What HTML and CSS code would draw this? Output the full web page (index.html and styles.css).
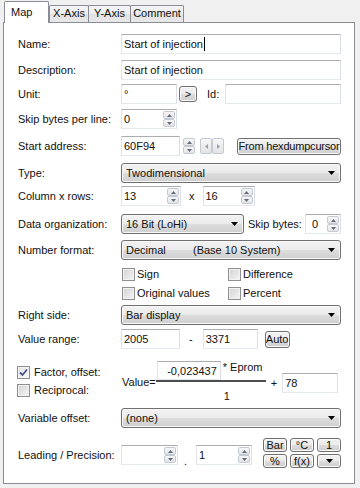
FILE: index.html
```html
<!DOCTYPE html>
<html lang="en">
<head>
    <meta charset="UTF-8">
    <meta name="viewport" content="width=device-width, initial-scale=1.0">
    <title>Map properties</title>
    <link rel="stylesheet" href="styles.css">
</head>
<body>
<div class="dialog">
    <div class="tabs">
        <div class="tab tab-map">Map</div>
        <div class="tab tab-x">X-Axis</div>
        <div class="tab tab-y">Y-Axis</div>
        <div class="tab tab-comment">Comment</div>
    </div>

    <div class="panel">
        <div class="row row-name">
            <span class="lbl">Name:</span>
            <div class="edit grow"><span>Start of injection</span><span class="caret"></span></div>
        </div>

        <div class="row row-desc">
            <span class="lbl">Description:</span>
            <div class="edit grow"><span>Start of injection</span></div>
        </div>

        <div class="row row-unit">
            <span class="lbl">Unit:</span>
            <div class="edit w-unit"><span>°</span></div>
            <button class="btn btn-more">&gt;</button>
            <span class="id-lbl">Id:</span>
            <div class="edit grow id-edit"></div>
        </div>

        <div class="row row-skip">
            <span class="lbl">Skip bytes per line:</span>
            <div class="edit w-unit">
                <span class="val">0</span>
                <span class="spin">
                    <span class="spin-btn"><svg width="5" height="3" viewBox="0 0 5 3"><path d="M0 3L2.5 0L5 3Z"/></svg></span>
                    <span class="spin-btn"><svg width="5" height="3" viewBox="0 0 5 3"><path d="M0 0L2.5 3L5 0Z"/></svg></span>
                </span>
            </div>
        </div>

        <div class="row row-start">
            <span class="lbl">Start address:</span>
            <div class="edit w-start"><span>60F94</span></div>
            <span class="spin spin-free">
                <span class="spin-btn"><svg width="5" height="3" viewBox="0 0 5 3"><path d="M0 3L2.5 0L5 3Z"/></svg></span>
                <span class="spin-btn"><svg width="5" height="3" viewBox="0 0 5 3"><path d="M0 0L2.5 3L5 0Z"/></svg></span>
            </span>
            <span class="lr">
                <span class="lr-btn"><svg width="3" height="5" viewBox="0 0 3 5"><path d="M3 0L0 2.5L3 5Z"/></svg></span>
                <span class="lr-btn"><svg width="3" height="5" viewBox="0 0 3 5"><path d="M0 0L3 2.5L0 5Z"/></svg></span>
            </span>
            <button class="btn btn-hex">From hexdumpcursor</button>
        </div>

        <div class="row row-type">
            <span class="lbl">Type:</span>
            <div class="combo grow">
                <span>Twodimensional</span>
                <svg class="arrow" width="7" height="4" viewBox="0 0 7 4"><path d="M0 0H7L3.5 4Z"/></svg>
            </div>
        </div>

        <div class="row row-cols">
            <span class="lbl">Column x rows:</span>
            <div class="edit w-cols">
                <span class="val">13</span>
                <span class="spin">
                    <span class="spin-btn"><svg width="5" height="3" viewBox="0 0 5 3"><path d="M0 3L2.5 0L5 3Z"/></svg></span>
                    <span class="spin-btn"><svg width="5" height="3" viewBox="0 0 5 3"><path d="M0 0L2.5 3L5 0Z"/></svg></span>
                </span>
            </div>
            <span class="times">x</span>
            <div class="edit w-rows">
                <span class="val">16</span>
                <span class="spin">
                    <span class="spin-btn"><svg width="5" height="3" viewBox="0 0 5 3"><path d="M0 3L2.5 0L5 3Z"/></svg></span>
                    <span class="spin-btn"><svg width="5" height="3" viewBox="0 0 5 3"><path d="M0 0L2.5 3L5 0Z"/></svg></span>
                </span>
            </div>
        </div>

        <div class="row row-data">
            <span class="lbl">Data organization:</span>
            <div class="combo w-data">
                <span>16 Bit (LoHi)</span>
                <svg class="arrow" width="7" height="4" viewBox="0 0 7 4"><path d="M0 0H7L3.5 4Z"/></svg>
            </div>
            <span class="skip-lbl">Skip bytes:</span>
            <div class="edit w-skip">
                <span class="val">0</span>
                <span class="spin">
                    <span class="spin-btn"><svg width="5" height="3" viewBox="0 0 5 3"><path d="M0 3L2.5 0L5 3Z"/></svg></span>
                    <span class="spin-btn"><svg width="5" height="3" viewBox="0 0 5 3"><path d="M0 0L2.5 3L5 0Z"/></svg></span>
                </span>
            </div>
        </div>

        <div class="row row-format">
            <span class="lbl">Number format:</span>
            <div class="combo grow">
                <span class="fmt-name">Decimal</span>
                <span class="fmt-desc">(Base 10 System)</span>
                <svg class="arrow" width="7" height="4" viewBox="0 0 7 4"><path d="M0 0H7L3.5 4Z"/></svg>
            </div>
        </div>

        <div class="row row-check row-sign">
            <span class="lbl"></span>
            <span class="chk-cell"><span class="chk"></span>Sign</span>
            <span class="chk-cell"><span class="chk"></span>Difference</span>
        </div>

        <div class="row row-check row-orig">
            <span class="lbl"></span>
            <span class="chk-cell"><span class="chk"></span>Original values</span>
            <span class="chk-cell"><span class="chk"></span>Percent</span>
        </div>

        <div class="row row-right">
            <span class="lbl">Right side:</span>
            <div class="combo grow">
                <span>Bar display</span>
                <svg class="arrow" width="7" height="4" viewBox="0 0 7 4"><path d="M0 0H7L3.5 4Z"/></svg>
            </div>
        </div>

        <div class="row row-range">
            <span class="lbl">Value range:</span>
            <div class="edit w-start"><span>2005</span></div>
            <span class="dash">-</span>
            <div class="edit w-max"><span>3371</span></div>
            <button class="btn btn-auto">Auto</button>
        </div>

        <div class="row row-factor">
            <div class="chk-col">
                <span class="chk-line"><span class="chk checked"><svg width="11" height="11" viewBox="0 0 11 11"><path d="M2 5.5L4.5 8L9 2.5" fill="none" stroke="#42548a" stroke-width="1.8"/></svg></span>Factor, offset:</span>
                <span class="chk-line"><span class="chk"></span>Reciprocal:</span>
            </div>
            <span class="value-lbl">Value=</span>
            <div class="fraction">
                <div class="frac-top">
                    <div class="edit num"><span>-0,023437</span></div>
                    <span class="eprom">* Eprom</span>
                </div>
                <div class="frac-line"></div>
                <div class="frac-bottom">1</div>
            </div>
            <span class="plus">+</span>
            <div class="edit w-offset"><span>78</span></div>
        </div>

        <div class="row row-var">
            <span class="lbl">Variable offset:</span>
            <div class="combo grow">
                <span>(none)</span>
                <svg class="arrow" width="7" height="4" viewBox="0 0 7 4"><path d="M0 0H7L3.5 4Z"/></svg>
            </div>
        </div>

        <div class="row row-lead">
            <span class="lbl">Leading / Precision:</span>
            <div class="edit w-lead">
                <span class="val"></span>
                <span class="spin">
                    <span class="spin-btn"><svg width="5" height="3" viewBox="0 0 5 3"><path d="M0 3L2.5 0L5 3Z"/></svg></span>
                    <span class="spin-btn"><svg width="5" height="3" viewBox="0 0 5 3"><path d="M0 0L2.5 3L5 0Z"/></svg></span>
                </span>
            </div>
            <span class="dot">.</span>
            <div class="edit w-prec">
                <span class="val">1</span>
                <span class="spin">
                    <span class="spin-btn"><svg width="5" height="3" viewBox="0 0 5 3"><path d="M0 3L2.5 0L5 3Z"/></svg></span>
                    <span class="spin-btn"><svg width="5" height="3" viewBox="0 0 5 3"><path d="M0 0L2.5 3L5 0Z"/></svg></span>
                </span>
            </div>
            <div class="unit-grid">
                <button class="btn small">Bar</button>
                <button class="btn small">°C</button>
                <button class="btn small">1</button>
                <button class="btn small">%</button>
                <button class="btn small">f(x)</button>
                <button class="btn small"><svg width="7" height="4" viewBox="0 0 7 4"><path d="M0 0H7L3.5 4Z"/></svg></button>
            </div>
        </div>
    </div>
</div>
</body>
</html>
```

FILE: styles.css
```css
* {
    box-sizing: border-box;
}
body {
    margin: 0;
    background: #f0f0f0;
    font-family: "Liberation Sans", Arial, sans-serif;
    font-size: 11px;
    color: #111;
    white-space: nowrap;
}
.dialog {
    width: 360px;
    height: 488px;
    padding-left: 3px;
    overflow: hidden;
}

/* tabs */
.tabs {
    display: flex;
    align-items: flex-end;
    height: 22px;
    padding-left: 1px;
}
.tab {
    height: 17px;
    border: 1px solid #898c95;
    border-bottom: none;
    border-radius: 2px 2px 0 0;
    background: linear-gradient(#f5f5f5, #ececec 50%, #e2e2e2 50%, #e8e8e8);
    text-align: center;
    line-height: 15px;
}
.tab-map {
    width: 45px;
    height: 22px;
    margin-bottom: -1px;
    padding: 2px 0 0 6px;
    background: #fff;
    text-align: left;
    line-height: 17px;
    position: relative;
    z-index: 1;
}
.tab-x { width: 40px; }
.tab-y { width: 43px; margin-left: -1px; }
.tab-comment { width: 54px; margin-left: -1px; }

.panel {
    width: 352px;
    height: 462px;
    border: 1px solid #898c95;
    background: #fff;
    padding: 11px 13px 0 14px;
}

/* rows */
.row {
    display: flex;
    align-items: center;
    height: 20px;
}
.lbl {
    width: 103px;
    flex: none;
}
.row-desc { margin-top: 6px; }
.row-unit { margin-top: 4px; }
.row-skip { margin-top: 5px; }
.row-start { margin-top: 7px; }
.row-type { margin-top: 7px; }
.row-cols { margin-top: 3px; }
.row-data { margin-top: 8px; }
.row-format { margin-top: 6px; }
.row-check { height: 14px; }
.row-sign { margin-top: 7px; }
.row-orig { margin-top: 5px; }
.row-right { margin-top: 5px; }
.row-range { margin-top: 4px; }
.row-factor { margin-top: 12px; height: 40px; }
.row-var { margin-top: 7px; }
.row-lead { margin-top: 10px; height: 34px; }

/* text boxes */
.edit {
    height: 20px;
    flex: none;
    display: flex;
    align-items: center;
    padding: 0 1px 0 2px;
    border: 1px solid;
    border-color: #abadb3 #dbdfe6 #e3e9ef #e2e3ea;
    background: #fff;
}
.grow { flex: 1; }
.val { flex: 1; }
.caret {
    width: 1px;
    height: 14px;
    margin-left: 1px;
    background: #000;
}
.w-unit { width: 56px; }
.w-start { width: 59px; }
.w-cols { width: 60px; }
.w-rows { width: 52px; margin-left: 8px; }
.w-skip { width: 36px; margin-left: auto; padding-left: 6px; }
.w-max { width: 55px; margin-left: 10px; }
.w-offset { width: 56px; margin-left: 5px; margin-top: 3px; }
.w-lead { width: 57px; }
.w-prec { width: 56px; margin-left: 9px; }

.id-lbl { margin-left: 10px; }
.id-edit { margin-left: 6px; }
.times { margin-left: 8px; }
.dash { margin-left: 9px; }
.skip-lbl { margin-left: 4px; }
.dot { margin-left: 6px; align-self: flex-end; margin-bottom: 5px; }

/* spin buttons */
.spin {
    display: flex;
    flex-direction: column;
    width: 12px;
    height: 16px;
    flex: none;
}
.spin-btn, .lr-btn {
    flex: 1;
    display: flex;
    align-items: center;
    justify-content: center;
    border: 1px solid #c3cad4;
    border-radius: 2px;
    background: linear-gradient(#f7f7f7, #e4e4e4);
}
.spin-btn svg, .lr-btn svg {
    fill: #5f6c80;
}
.spin-free { margin-left: 3px; }
.lr {
    display: flex;
    width: 24px;
    height: 16px;
    margin-left: 5px;
}
.lr-btn svg { fill: #9aa3ae; }

/* buttons */
.btn {
    font: inherit;
    color: #111;
    padding: 0;
    border: 1px solid #707070;
    border-radius: 3px;
    background: linear-gradient(#f2f2f2 0%, #ebebeb 50%, #dddddd 51%, #cfcfcf 100%);
    box-shadow: inset 0 0 0 1px #fafafa;
    display: flex;
    align-items: center;
    justify-content: center;
    line-height: 1;
    flex: none;
    white-space: nowrap;
}
.btn-more { width: 18px; height: 16px; margin-left: 2px; }
.btn-hex { width: 104px; height: 17px; margin-left: auto; letter-spacing: -0.2px; }
.btn-auto { width: 25px; height: 17px; margin-left: 7px; }

/* combo boxes */
.combo {
    height: 20px;
    display: flex;
    align-items: center;
    padding: 0 5px 0 4px;
    border: 1px solid #707070;
    border-radius: 3px;
    background: linear-gradient(#f2f2f2 0%, #ebebeb 50%, #dddddd 51%, #cfcfcf 100%);
    box-shadow: inset 0 0 0 1px #f8f8f8;
}
.combo .arrow { margin-left: auto; }
.w-data { width: 123px; flex: none; }
.fmt-name { width: 67px; }

/* checkboxes */
.chk {
    width: 13px;
    height: 13px;
    flex: none;
    border: 1px solid #8f8f8f;
    background: linear-gradient(135deg, #d2d2d2, #f6f6f6);
    box-shadow: inset 0 0 0 1px #f2f2f2;
    display: flex;
    align-items: center;
    justify-content: center;
}
.chk.checked { background: linear-gradient(135deg, #e2e2e2, #fbfbfb); }
.chk-cell {
    width: 106px;
    display: flex;
    align-items: center;
    padding-left: 1px;
}
.chk-cell .chk { margin-right: 2px; }
.chk-col {
    width: 103px;
    flex: none;
    display: flex;
    flex-direction: column;
    gap: 4px;
}
.chk-line {
    display: flex;
    align-items: center;
    height: 14px;
    margin-left: -1px;
}
.chk-line .chk { margin-right: 4px; }

/* factor / offset formula */
.value-lbl { margin-left: 1px; margin-top: 2px; }
.fraction {
    width: 110px;
    align-self: flex-start;
    flex: none;
}
.frac-top {
    display: flex;
    align-items: flex-start;
    height: 19px;
}
.num {
    width: 64px;
    height: 19px;
    margin-left: 1px;
    justify-content: flex-end;
    padding-right: 3px;
}
.eprom { margin-left: 2px; line-height: 13px; }
.frac-line {
    height: 2px;
    background: #4d4d4d;
}
.frac-bottom {
    padding: 8px 0 0 68px;
    line-height: 13px;
}
.plus { margin-left: 5px; margin-top: 3px; }

/* unit buttons */
.unit-grid {
    margin-left: auto;
    display: grid;
    grid-template-columns: 24px 24px 24px;
    grid-auto-rows: 14px;
    gap: 2px 3px;
    align-self: flex-start;
}
```
